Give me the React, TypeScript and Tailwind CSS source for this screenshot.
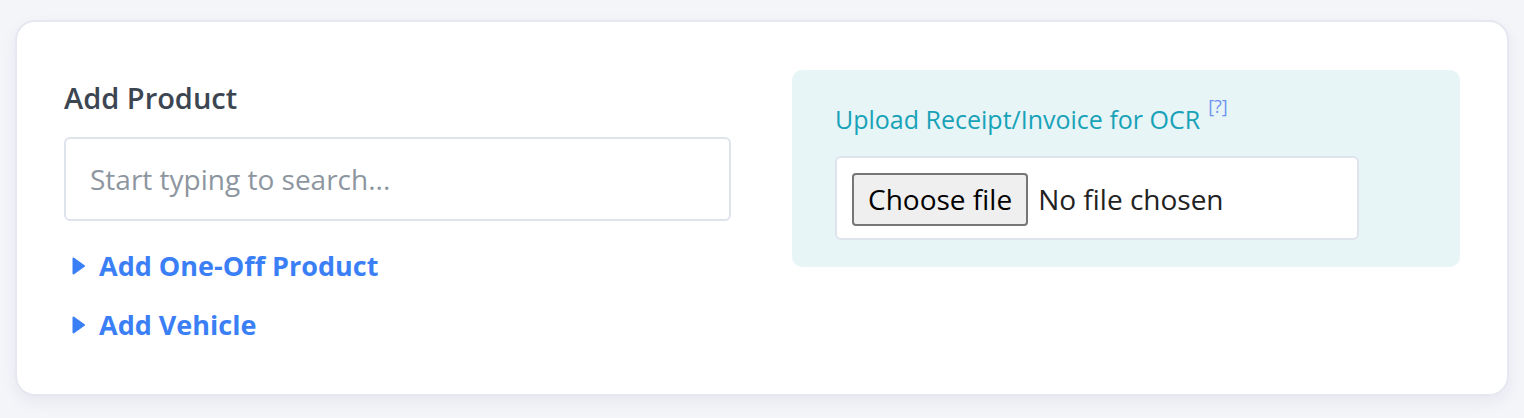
// App.tsx
const font = { fontFamily: '"Open Sans", "Noto Sans", sans-serif' };

function Caret() {
  return (
    <svg width="13" height="18" viewBox="0 0 13 18" className="shrink-0">
      <path d="M1.5 1.5 L12 9 L1.5 16.5 Z" fill="#3b7ff6" strokeLinejoin="round" stroke="#3b7ff6" strokeWidth="2" />
    </svg>
  );
}

function ToggleLink({ label }: { label: string }) {
  return (
    <button className="flex items-center gap-[14px] pl-[8px] text-[27px] font-bold text-[#3b7ff6] leading-[27px]">
      <Caret />
      <span>{label}</span>
    </button>
  );
}

export default function App() {
  return (
    <div className="min-h-[418px] w-full bg-[#f4f5f9] px-[15px] pt-[20px] pb-[22px]" style={font}>
      <div className="flex gap-[61px] rounded-[20px] border-2 border-[#e6e8f1] bg-white px-[47px] pt-[48px] pb-[56px] shadow-[0_6px_16px_rgba(30,40,90,0.06)]">
        {/* Product column */}
        <div className="flex w-[667px] flex-col pt-[10px]">
          <h2 className="text-[29px] font-semibold leading-[36px] text-[#3c4552]">Add Product</h2>
          <input
            type="text"
            placeholder="Start typing to search..."
            className="mt-[21px] h-[84px] w-full rounded-[6px] border-2 border-[#dfe3ec] bg-white px-[24px] text-[28px] text-[#3c4552] placeholder:text-[#8d96a0] outline-none"
          />
          <div className="mt-[31px] flex flex-col items-start gap-[32px]">
            <ToggleLink label="Add One-Off Product" />
            <ToggleLink label="Add Vehicle" />
          </div>
        </div>

        {/* OCR upload */}
        <div className="self-start w-[668px] rounded-[10px] bg-[#e8f5f7] px-[43px] pt-[33px] pb-[27px]">
          <div className="flex h-[32px] items-center">
            <label className="text-[25px] leading-[32px] text-[#17a2b8]">Upload Receipt/Invoice for OCR</label>
            <sup className="ml-[8px] -mt-[8px] text-[18px] leading-none text-[#6e93f0]">[?]</sup>
          </div>
          <div className="mt-[21px] flex h-[84px] w-[524px] items-center rounded-[6px] border-2 border-[#dfe3ec] bg-white px-[15px] pt-[2px]">
            <button className="h-[53px] rounded-[4px] border-2 border-[#767676] bg-[#efefef] px-[14px] text-[28px] text-black leading-none">
              Choose file
            </button>
            <span className="ml-[10px] text-[28px] text-[#222]">No file chosen</span>
          </div>
        </div>
      </div>
    </div>
  );
}
